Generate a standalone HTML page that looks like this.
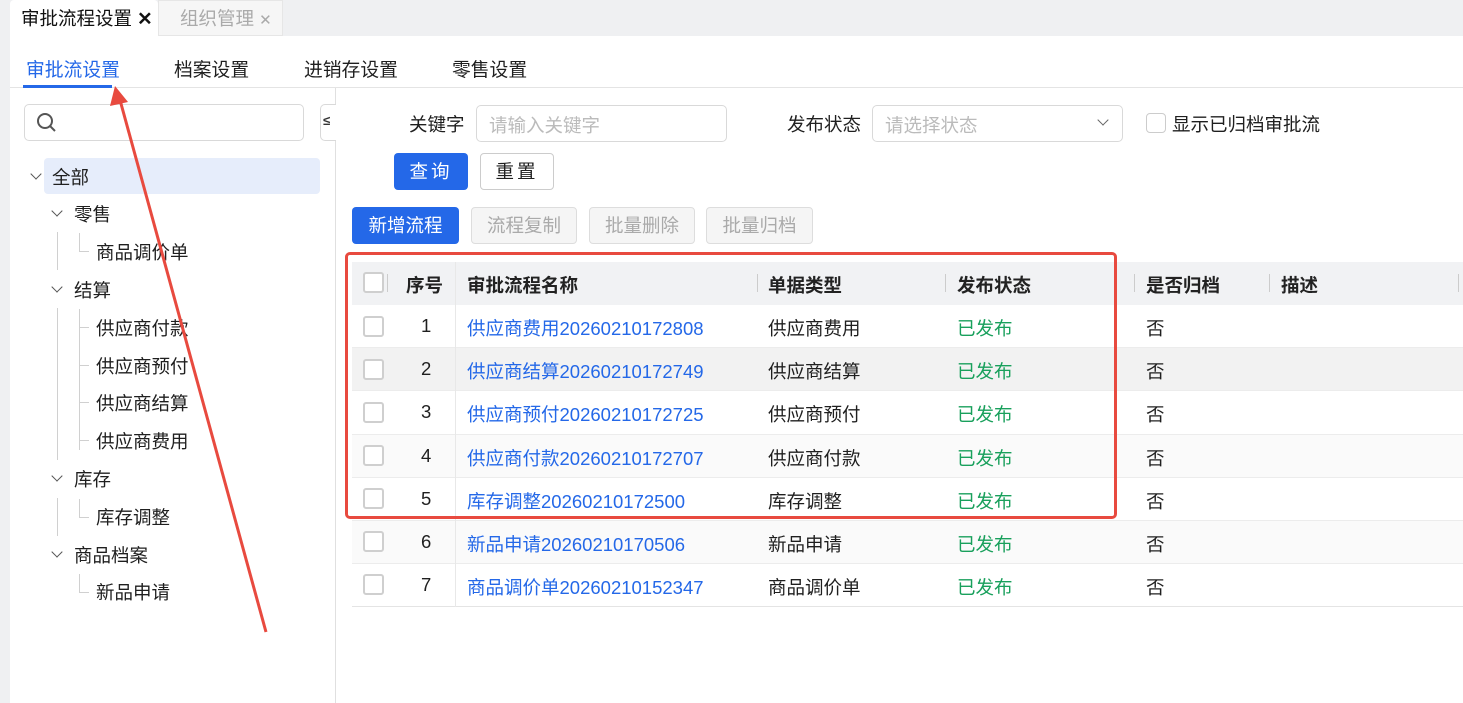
<!DOCTYPE html>
<html><head><meta charset="utf-8">
<style>
*{box-sizing:border-box;margin:0;padding:0}
body{width:1463px;height:703px;position:relative;overflow:hidden;background:#fff;font-family:"Liberation Sans","Noto Sans CJK SC",sans-serif;font-size:18.5px;color:#1f1f1f}
.a{position:absolute;white-space:nowrap}
.cb{position:absolute;width:21px;height:21px;border:2px solid #cfcfcf;border-radius:3px;background:#fff}
.th{font-weight:bold;color:#222}
.sep{position:absolute;width:1px;height:18px;background:#ccc}
.link{color:#2468e8}
.green{color:#19a05c}
.tree{position:absolute;white-space:nowrap;font-size:18.5px}
.chev{position:absolute;width:8px;height:8px;border-right:1.5px solid #555;border-bottom:1.5px solid #555;transform:rotate(45deg)}
.vl{position:absolute;width:1px;background:#d0d0d0}
.hl{position:absolute;height:1px;background:#d0d0d0}
</style></head><body>
<div class="a" style="left:0;top:0;width:1463px;height:36px;background:#eff0f2"></div>
<div class="a" style="left:0;top:0;width:10px;height:703px;background:#eff0f2"></div>
<div class="a" style="left:10px;top:0;width:148px;height:36px;background:#fff;border-radius:4px 4px 0 0"></div>
<div class="a" style="left:21px;top:5px;font-size:18.5px;color:#111">审批流程设置 <span style="font-weight:bold">✕</span></div>
<div class="a" style="left:158px;top:0;width:125px;height:36px;background:#f6f6f6;border:1px solid #e6e6e6"></div>
<div class="a" style="left:180px;top:5px;font-size:18.5px;color:#aaa">组织管理 <span style="font-size:15px">✕</span></div>
<div class="a" style="left:26px;top:55px;font-size:18.8px;color:#2468e8">审批流设置</div>
<div class="a" style="left:174px;top:55px;font-size:18.8px">档案设置</div>
<div class="a" style="left:304px;top:55px;font-size:18.8px">进销存设置</div>
<div class="a" style="left:452px;top:55px;font-size:18.8px">零售设置</div>
<div class="a" style="left:10px;top:87px;width:1453px;height:1px;background:#e4e4e4"></div>
<div class="a" style="left:23px;top:85px;width:89px;height:3px;background:#2468e8"></div>
<div class="a" style="left:335px;top:88px;width:1px;height:615px;background:#e0e0e0"></div>
<div class="a" style="left:24px;top:104px;width:280px;height:37px;border:1px solid #d9d9d9;border-radius:5px"></div>
<svg class="a" style="left:36px;top:112px" width="22" height="22" viewBox="0 0 22 22"><circle cx="9" cy="9" r="7" fill="none" stroke="#555" stroke-width="2"/><line x1="14" y1="14" x2="19" y2="19" stroke="#555" stroke-width="2"/></svg>
<div class="a" style="left:320px;top:104px;width:16px;height:37px;border:1px solid #d9d9d9;border-right:none;border-radius:5px 0 0 5px;background:#fff"></div>
<div class="a" style="left:323px;top:113px;font-size:13px;font-weight:bold;color:#333">≤</div>
<div class="a" style="left:44px;top:158px;width:276px;height:36px;background:#e6edfb;border-radius:4px"></div>
<div class="chev" style="left:32px;top:170px"></div>
<div class="tree" style="left:52px;top:164px">全部</div>
<div class="chev" style="left:53px;top:207px"></div>
<div class="tree" style="left:74px;top:201px">零售</div>
<div class="vl" style="left:57px;top:232px;height:38px"></div>
<div class="vl" style="left:79px;top:233px;height:18px"></div><div class="hl" style="left:79px;top:251px;width:10px"></div>
<div class="tree" style="left:96px;top:239px">商品调价单</div>
<div class="chev" style="left:53px;top:283px"></div>
<div class="tree" style="left:74px;top:277px">结算</div>
<div class="vl" style="left:57px;top:308px;height:152px"></div>
<div class="vl" style="left:79px;top:309px;height:141px"></div>
<div class="hl" style="left:79px;top:327px;width:10px"></div>
<div class="hl" style="left:79px;top:365px;width:10px"></div>
<div class="hl" style="left:79px;top:402px;width:10px"></div>
<div class="hl" style="left:79px;top:440px;width:10px"></div>
<div class="tree" style="left:96px;top:315px">供应商付款</div>
<div class="tree" style="left:96px;top:353px">供应商预付</div>
<div class="tree" style="left:96px;top:390px">供应商结算</div>
<div class="tree" style="left:96px;top:428px">供应商费用</div>
<div class="chev" style="left:53px;top:472px"></div>
<div class="tree" style="left:74px;top:466px">库存</div>
<div class="vl" style="left:57px;top:498px;height:38px"></div>
<div class="vl" style="left:79px;top:499px;height:18px"></div><div class="hl" style="left:79px;top:517px;width:10px"></div>
<div class="tree" style="left:96px;top:504px">库存调整</div>
<div class="chev" style="left:53px;top:548px"></div>
<div class="tree" style="left:74px;top:542px">商品档案</div>
<div class="vl" style="left:79px;top:574px;height:18px"></div><div class="hl" style="left:79px;top:592px;width:10px"></div>
<div class="tree" style="left:96px;top:579px">新品申请</div>
<div class="a" style="left:409px;top:111px">关键字</div>
<div class="a" style="left:476px;top:105px;width:251px;height:37px;border:1px solid #d9d9d9;border-radius:5px"></div>
<div class="a" style="left:489px;top:112px;color:#bbb">请输入关键字</div>
<div class="a" style="left:787px;top:111px">发布状态</div>
<div class="a" style="left:872px;top:105px;width:251px;height:37px;border:1px solid #d9d9d9;border-radius:5px"></div>
<div class="a" style="left:885px;top:112px;color:#bbb">请选择状态</div>
<div class="chev" style="left:1099px;top:116px;border-color:#666"></div>
<div class="a" style="left:1146px;top:113px;width:20px;height:20px;border:1px solid #ccc;border-radius:4px"></div>
<div class="a" style="left:1172px;top:111px">显示已归档审批流</div>
<div class="a" style="left:394px;top:153px;width:74px;height:37px;background:#2468e8;border-radius:4px;color:#fff;text-align:center;line-height:37px;letter-spacing:3px">查询</div>
<div class="a" style="left:480px;top:153px;width:74px;height:37px;border:1px solid #ccc;border-radius:4px;text-align:center;line-height:35px;letter-spacing:3px">重置</div>
<div class="a" style="left:352px;top:207px;width:107px;height:37px;background:#2468e8;border-radius:4px;color:#fff;text-align:center;line-height:37px">新增流程</div>
<div class="a" style="left:471px;top:207px;width:106px;height:37px;background:#f5f5f5;border:1px solid #ddd;border-radius:4px;color:#aaa;text-align:center;line-height:35px">流程复制</div>
<div class="a" style="left:589px;top:207px;width:106px;height:37px;background:#f5f5f5;border:1px solid #ddd;border-radius:4px;color:#aaa;text-align:center;line-height:35px">批量删除</div>
<div class="a" style="left:706px;top:207px;width:107px;height:37px;background:#f5f5f5;border:1px solid #ddd;border-radius:4px;color:#aaa;text-align:center;line-height:35px">批量归档</div>
<div class="a" style="left:352px;top:262px;width:1111px;height:43px;background:#f1f2f4"></div>
<div class="a" style="left:352px;top:348px;width:1111px;height:43px;background:#f2f2f2"></div>
<div class="a" style="left:352px;top:435px;width:1111px;height:43px;background:#fafafa"></div>
<div class="a" style="left:352px;top:521px;width:1111px;height:43px;background:#fafafa"></div>
<div class="a" style="left:352px;top:347px;width:1111px;height:1px;background:#ececec"></div>
<div class="a" style="left:352px;top:390px;width:1111px;height:1px;background:#ececec"></div>
<div class="a" style="left:352px;top:434px;width:1111px;height:1px;background:#ececec"></div>
<div class="a" style="left:352px;top:477px;width:1111px;height:1px;background:#ececec"></div>
<div class="a" style="left:352px;top:520px;width:1111px;height:1px;background:#ececec"></div>
<div class="a" style="left:352px;top:563px;width:1111px;height:1px;background:#ececec"></div>
<div class="a" style="left:352px;top:606px;width:1111px;height:1px;background:#e4e4e4"></div>
<div class="a" style="left:455px;top:262px;width:1px;height:345px;background:#e8e8e8"></div>
<div class="sep" style="left:387px;top:274px"></div>
<div class="sep" style="left:757px;top:274px"></div>
<div class="sep" style="left:945px;top:274px"></div>
<div class="sep" style="left:1134px;top:274px"></div>
<div class="sep" style="left:1269px;top:274px"></div>
<div class="sep" style="left:1458px;top:274px"></div>
<div class="cb" style="left:363px;top:272px"></div>
<div class="a th" style="left:406px;top:272px">序号</div>
<div class="a th" style="left:467px;top:272px">审批流程名称</div>
<div class="a th" style="left:768px;top:272px">单据类型</div>
<div class="a th" style="left:957px;top:272px">发布状态</div>
<div class="a th" style="left:1146px;top:272px">是否归档</div>
<div class="a th" style="left:1281px;top:272px">描述</div>

<div class="cb" style="left:363px;top:316px"></div><div class="a" style="left:421px;top:315px">1</div><div class="a link" style="left:467px;top:315px">供应商费用20260210172808</div><div class="a" style="left:768px;top:315px">供应商费用</div><div class="a green" style="left:957px;top:315px">已发布</div><div class="a" style="left:1146px;top:315px">否</div>
<div class="cb" style="left:363px;top:359px"></div><div class="a" style="left:421px;top:358px">2</div><div class="a link" style="left:467px;top:358px">供应商结算20260210172749</div><div class="a" style="left:768px;top:358px">供应商结算</div><div class="a green" style="left:957px;top:358px">已发布</div><div class="a" style="left:1146px;top:358px">否</div>
<div class="cb" style="left:363px;top:402px"></div><div class="a" style="left:421px;top:401px">3</div><div class="a link" style="left:467px;top:401px">供应商预付20260210172725</div><div class="a" style="left:768px;top:401px">供应商预付</div><div class="a green" style="left:957px;top:401px">已发布</div><div class="a" style="left:1146px;top:401px">否</div>
<div class="cb" style="left:363px;top:445px"></div><div class="a" style="left:421px;top:445px">4</div><div class="a link" style="left:467px;top:445px">供应商付款20260210172707</div><div class="a" style="left:768px;top:445px">供应商付款</div><div class="a green" style="left:957px;top:445px">已发布</div><div class="a" style="left:1146px;top:445px">否</div>
<div class="cb" style="left:363px;top:488px"></div><div class="a" style="left:421px;top:488px">5</div><div class="a link" style="left:467px;top:488px">库存调整20260210172500</div><div class="a" style="left:768px;top:488px">库存调整</div><div class="a green" style="left:957px;top:488px">已发布</div><div class="a" style="left:1146px;top:488px">否</div>
<div class="cb" style="left:363px;top:531px"></div><div class="a" style="left:421px;top:531px">6</div><div class="a link" style="left:467px;top:531px">新品申请20260210170506</div><div class="a" style="left:768px;top:531px">新品申请</div><div class="a green" style="left:957px;top:531px">已发布</div><div class="a" style="left:1146px;top:531px">否</div>
<div class="cb" style="left:363px;top:574px"></div><div class="a" style="left:421px;top:574px">7</div><div class="a link" style="left:467px;top:574px">商品调价单20260210152347</div><div class="a" style="left:768px;top:574px">商品调价单</div><div class="a green" style="left:957px;top:574px">已发布</div><div class="a" style="left:1146px;top:574px">否</div>
<div class="a" style="left:345px;top:252px;width:772px;height:267px;border:3px solid #e84a3f;border-radius:5px"></div>
<svg class="a" style="left:0;top:0" width="1463" height="703"><line x1="266" y1="632" x2="120" y2="100" stroke="#e84a3f" stroke-width="3"/><polygon points="115,86 110,106 128,102" fill="#e84a3f"/></svg>
</body></html>
